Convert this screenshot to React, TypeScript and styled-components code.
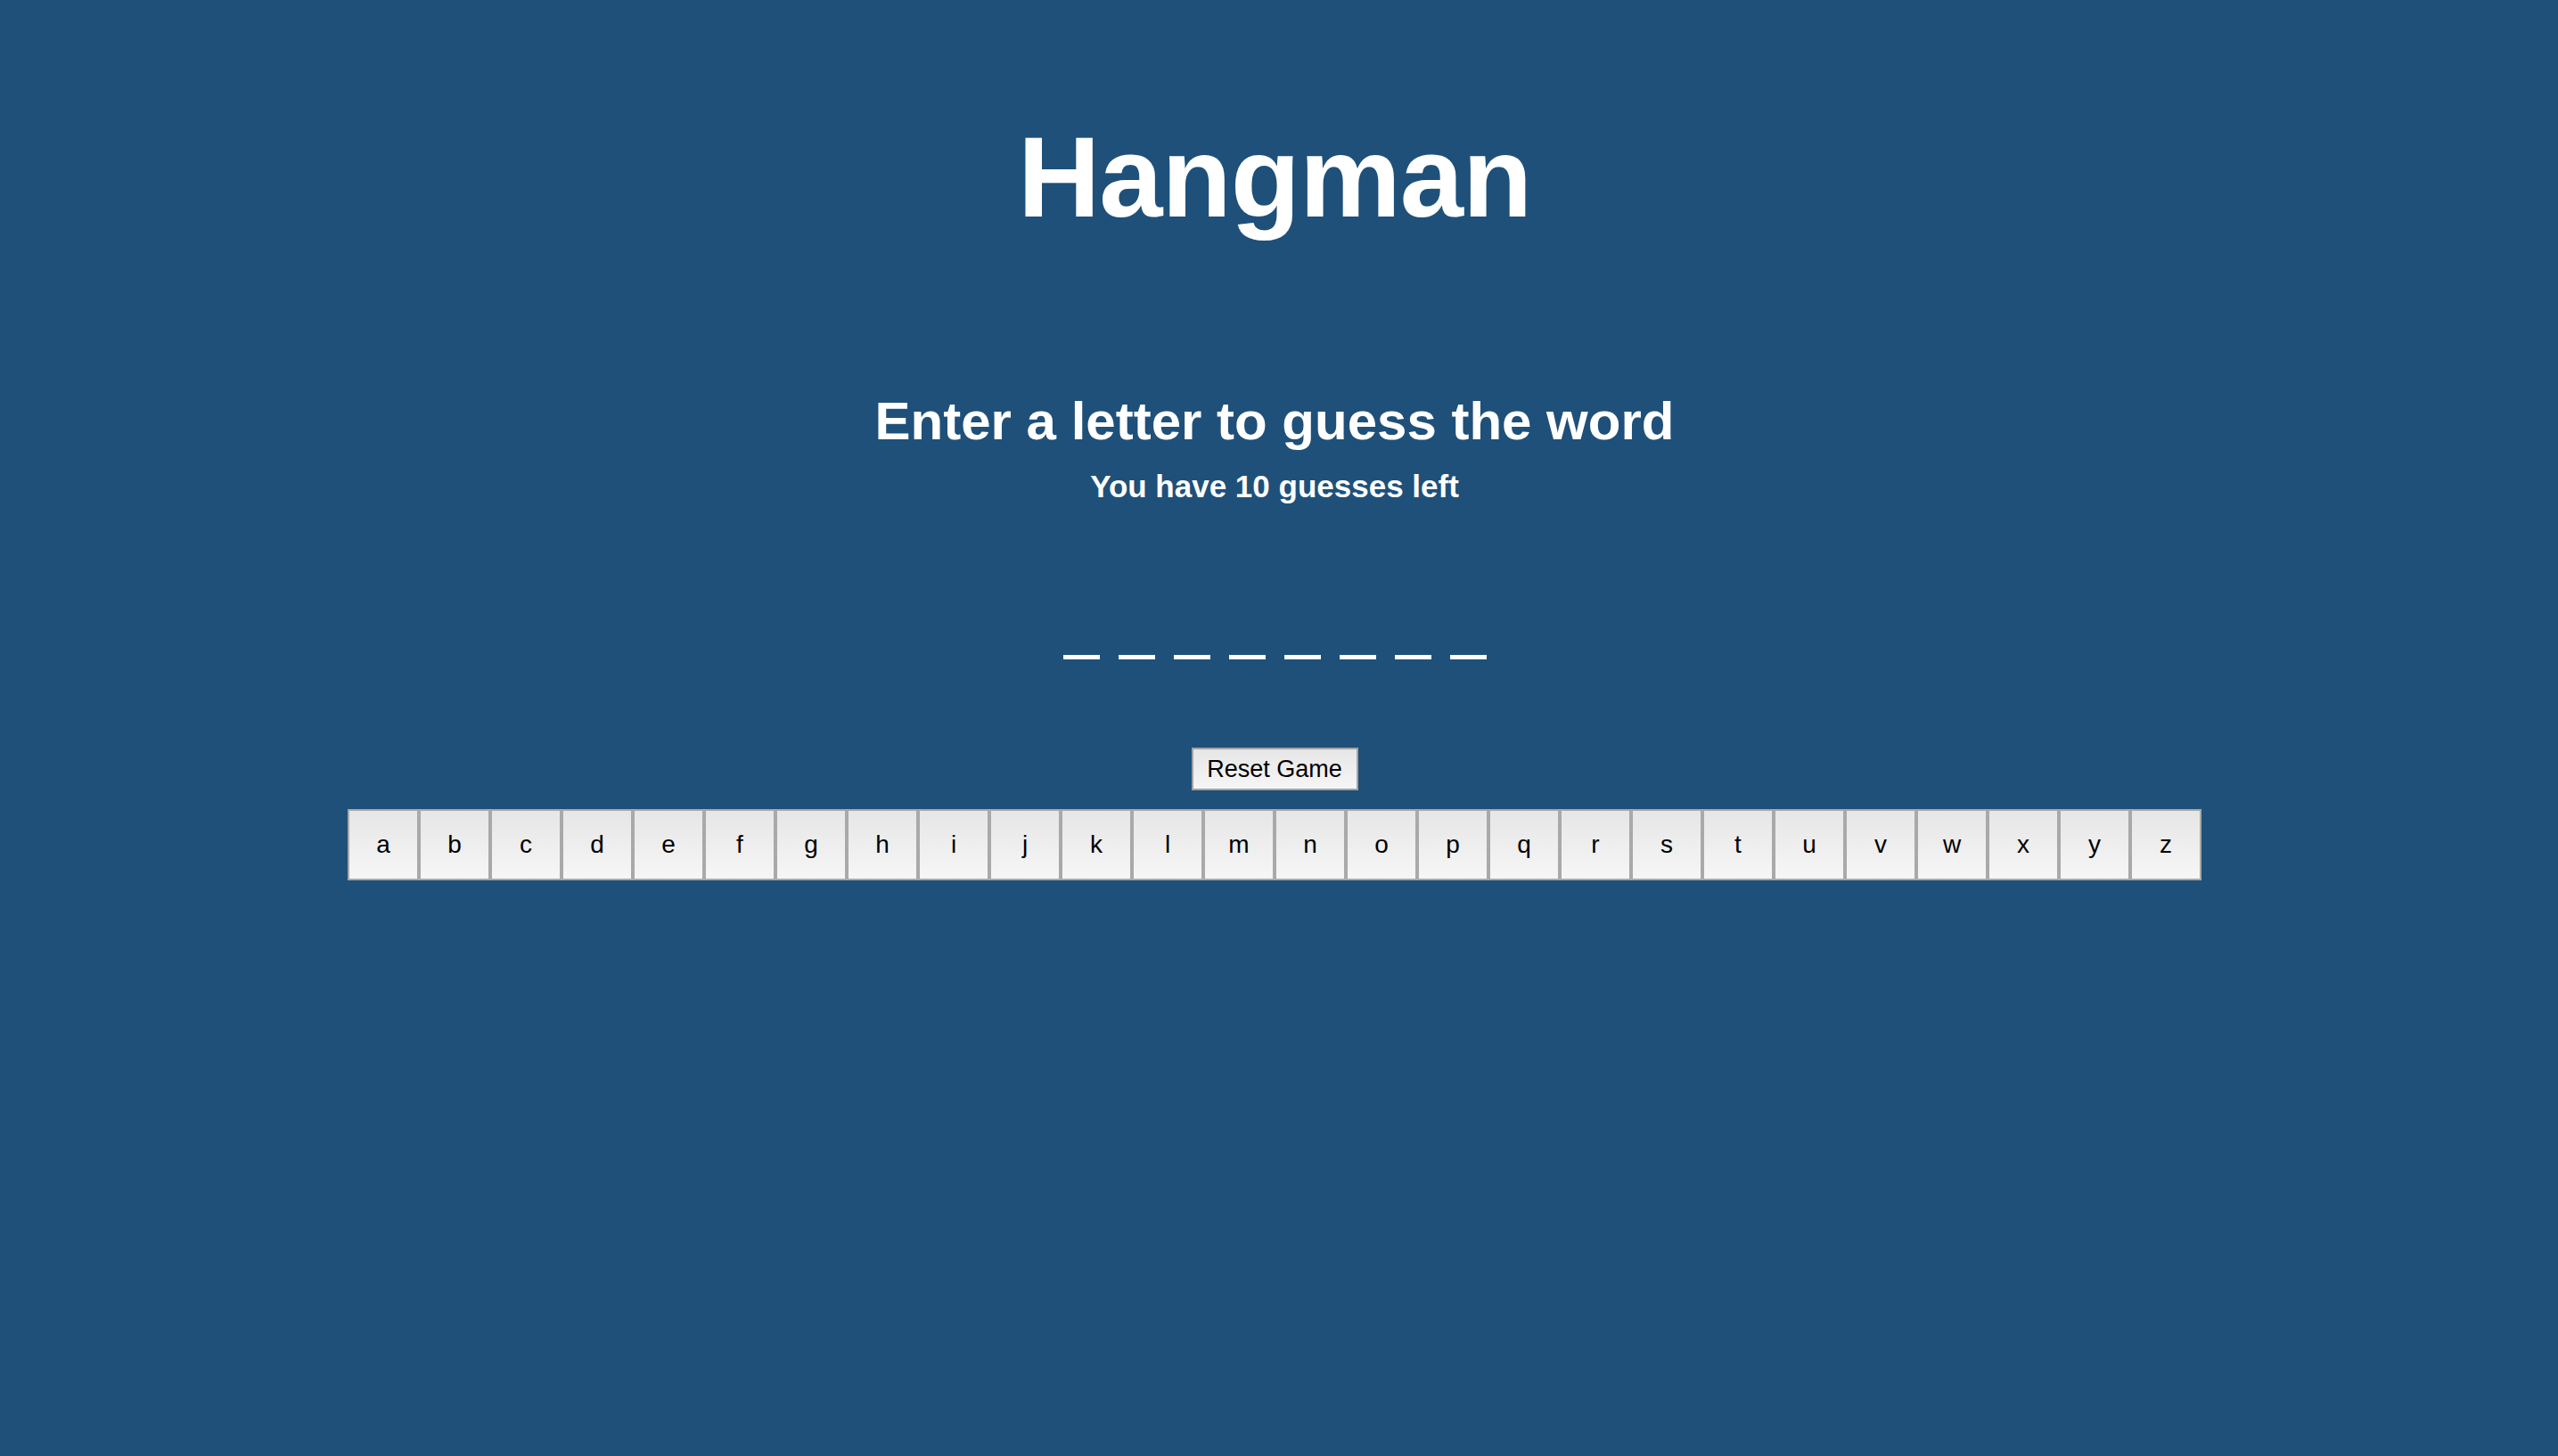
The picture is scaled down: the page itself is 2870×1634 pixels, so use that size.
import React from "react";
import styled, { createGlobalStyle } from "styled-components";

const GlobalStyle = createGlobalStyle`
  html, body {
    margin: 0;
    padding: 0;
    background: #1e507a;
  }
  body {
    font-family: "Liberation Sans", Arial, Helvetica, sans-serif;
    min-height: 1634px;
  }
`;

const Page = styled.main`
  display: flex;
  flex-direction: column;
  align-items: center;
  box-sizing: border-box;
  width: 100%;
  min-height: 1634px;
  padding: 135px 10px 0 0;
  color: #ffffff;
`;

const Title = styled.h1`
  margin: 0;
  font-size: 128px;
  line-height: 128px;
  font-weight: 700;
  letter-spacing: -1px;
`;

const Prompt = styled.h2`
  margin: 180px 0 0;
  font-size: 60px;
  line-height: 60px;
  font-weight: 700;
`;

const Remaining = styled.h3`
  margin: 26px 0 0;
  font-size: 35px;
  line-height: 34px;
  font-weight: 700;
`;

const Word = styled.div`
  display: flex;
  gap: 21px;
  margin-top: 172px;
  height: 5px;
`;

const Blank = styled.span`
  display: block;
  width: 41px;
  height: 5px;
  background: #ffffff;
`;

const ResetButton = styled.button`
  box-sizing: border-box;
  margin-top: 99px;
  width: 187px;
  height: 48px;
  padding: 0;
  border: 2px solid #a3a3a3;
  background: linear-gradient(#e6e6e6, #f6f6f6);
  color: #000;
  font-family: "Liberation Sans", Arial, sans-serif;
  font-size: 27px;
  cursor: pointer;
`;

const Keyboard = styled.div`
  display: flex;
  margin-top: 21px;
`;

const Key = styled.button`
  box-sizing: border-box;
  width: 80px;
  height: 80px;
  padding: 0;
  border: 2px solid #a9a9a9;
  background: linear-gradient(#e6e6e6, #f6f6f6);
  color: #000;
  font-family: "Liberation Sans", Arial, sans-serif;
  font-size: 28px;
  cursor: pointer;
`;

const letters = "abcdefghijklmnopqrstuvwxyz".split("");

export default function App() {
  const wordLength = 8;
  return (
    <>
      <GlobalStyle />
      <Page>
        <Title>Hangman</Title>
        <Prompt>Enter a letter to guess the word</Prompt>
        <Remaining>You have 10 guesses left</Remaining>
        <Word aria-label="word">
          {Array.from({ length: wordLength }).map((_, i) => (
            <Blank key={i} />
          ))}
        </Word>
        <ResetButton>Reset Game</ResetButton>
        <Keyboard>
          {letters.map((l) => (
            <Key key={l}>{l}</Key>
          ))}
        </Keyboard>
      </Page>
    </>
  );
}
